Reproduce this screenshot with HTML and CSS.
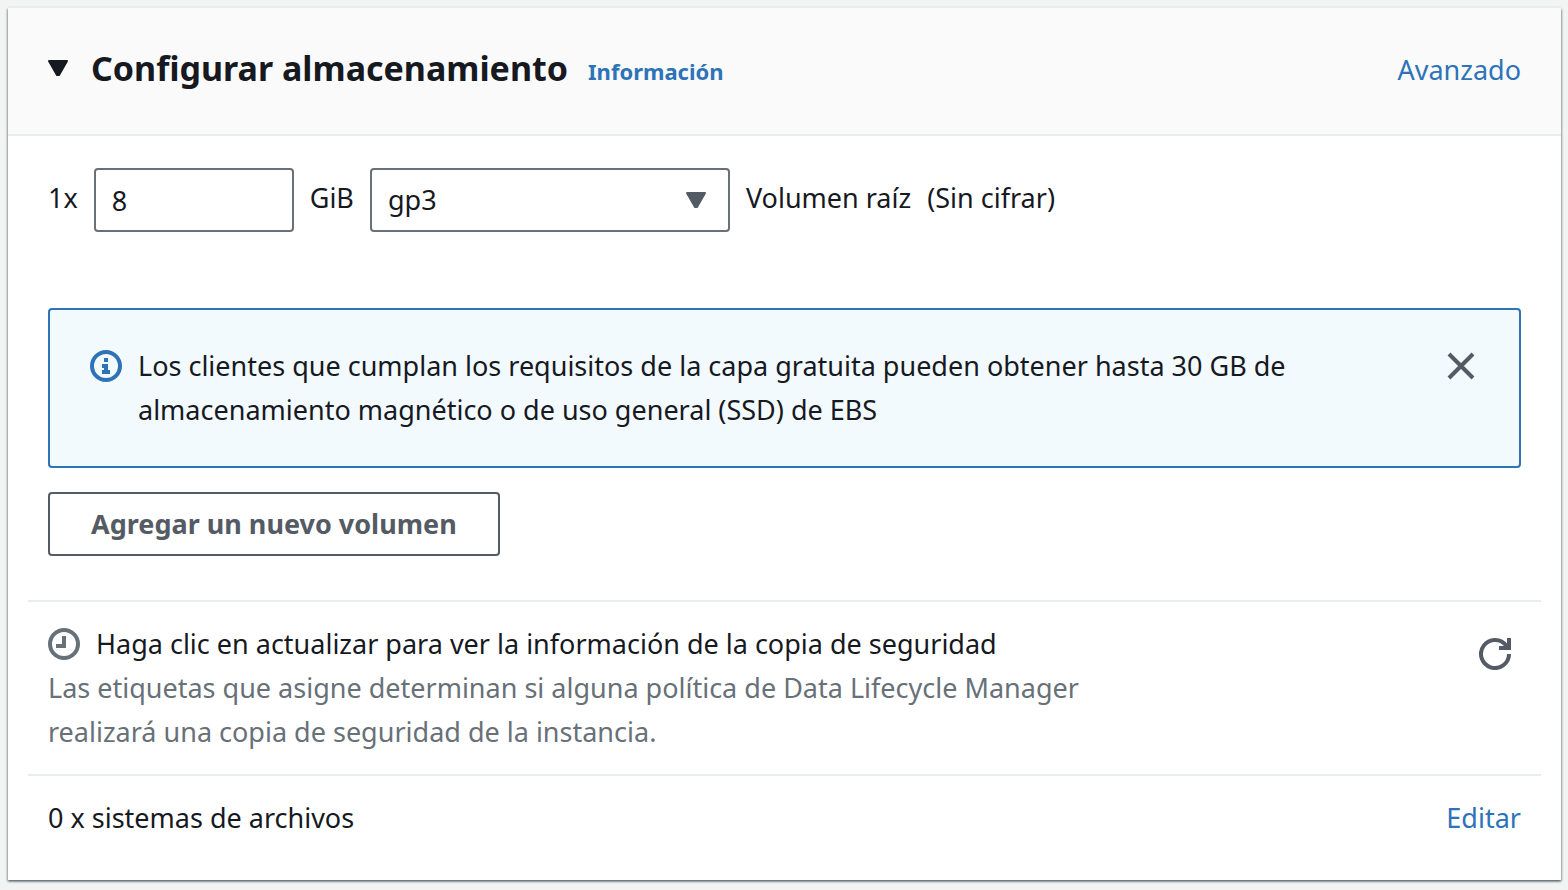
FILE: index.html
```html
<!DOCTYPE html>
<html lang="es">
<head>
<meta charset="utf-8">
<meta name="viewport" content="width=device-width, initial-scale=1">
<title>Configurar almacenamiento</title>
<link rel="stylesheet" href="styles.css">
</head>
<body>
<main class="card">
  <header class="card-header">
    <button class="icon-button toggle" type="button" aria-label="Contraer" aria-expanded="true">
      <svg width="20" height="16" viewBox="0 0 20 16" aria-hidden="true"><path d="M1 1h18l-8 14H9z" fill="#16191f" stroke="#16191f" stroke-width="2" stroke-linejoin="round"/></svg>
    </button>
    <h1 class="title">Configurar almacenamiento</h1>
    <a class="info-link" href="#">Información</a>
    <a class="link push" href="#">Avanzado</a>
  </header>

  <div class="card-body">
    <div class="volume">
      <label class="caption" for="size">1x</label>
      <input class="field size" id="size" type="text" inputmode="numeric" value="8">
      <label class="caption" for="type">GiB</label>
      <div class="select-wrap">
        <select class="field type" id="type"><option>gp3</option></select>
        <svg class="caret" width="20" height="16" viewBox="0 0 20 16" aria-hidden="true"><path d="M1 1h18l-8 14H9z" fill="#545b64" stroke="#545b64" stroke-width="2" stroke-linejoin="round"/></svg>
      </div>
      <span class="caption">Volumen raíz</span>
      <span class="caption">(Sin cifrar)</span>
    </div>

    <section class="alert">
      <svg class="alert-icon" width="32" height="32" viewBox="0 0 32 32" aria-hidden="true"><circle cx="16" cy="16" r="14" fill="none" stroke="#2e73b8" stroke-width="4"/><path d="M14 8h4v4h-4zM12 14h6v6h2v4h-8v-4h2v-2h-2z" fill="#2e73b8"/></svg>
      <p class="alert-text">Los clientes que cumplan los requisitos de la capa gratuita pueden obtener hasta 30 GB de almacenamiento magnético o de uso general (SSD) de EBS</p>
      <button class="icon-button close" type="button" aria-label="Cerrar">
        <svg width="28" height="28" viewBox="0 0 28 28" fill="none" stroke="#545b64" stroke-width="4" aria-hidden="true"><path d="M2 2l24 24M26 2L2 26"/></svg>
      </button>
    </section>

    <button class="add-button" type="button">Agregar un nuevo volumen</button>
  </div>

  <section class="row backup">
    <div class="backup-text">
      <p class="backup-title">
        <svg width="32" height="32" viewBox="0 0 32 32" fill="none" stroke="#687078" stroke-width="4" aria-hidden="true"><circle cx="16" cy="16" r="14"/><path d="M16 8v10H8"/></svg>
        Haga clic en actualizar para ver la información de la copia de seguridad
      </p>
      <p class="muted">Las etiquetas que asigne determinan si alguna política de Data Lifecycle Manager realizará una copia de seguridad de la instancia.</p>
    </div>
    <button class="icon-button refresh" type="button" aria-label="Actualizar">
      <svg width="32" height="32" viewBox="0 0 32 32" fill="none" stroke="#545b64" stroke-width="4" aria-hidden="true"><path d="M30 16A14 14 0 1 1 27.47 7.97M30 0v10H20"/><path d="M24 10l4-4v4z" fill="#545b64" stroke="none"/></svg>
    </button>
  </section>

  <section class="row files">
    <p>0 x sistemas de archivos</p>
    <a class="link push" href="#">Editar</a>
  </section>
</main>
</body>
</html>
```
FILE: styles.css
```css
* { box-sizing: border-box; }

body {
  margin: 0;
  padding: 8px 7px 8px 8px;
  background: #f2f3f3;
  color: #16191f;
  font: 27px/44px "Noto Sans", "Open Sans", sans-serif;
}

p, h1 { margin: 0; }
button, input, select { font: inherit; color: inherit; }
a { color: #2e73b8; text-decoration: none; }

.card {
  background: #fff;
  box-shadow:
    0 -2px 0 #eaeded,
    0 2px 2px rgba(0, 28, 36, 0.3),
    1px 1px 2px rgba(0, 28, 36, 0.3),
    -1px 1px 2px rgba(0, 28, 36, 0.3);
}

.card-header {
  display: flex;
  align-items: center;
  height: 128px;
  padding: 0 40px 6px;
  background: #fafafa;
  border-bottom: 2px solid #eaeded;
}

.icon-button {
  display: flex;
  padding: 0;
  border: 0;
  background: none;
  cursor: pointer;
}

.title { margin-left: 23px; font-size: 34px; font-weight: 700; }
.info-link { margin: 6px 0 0 20px; font-size: 22px; font-weight: 700; }
.push { margin-left: auto; }
.card-header .push { padding-top: 4px; }

.card-body { padding: 32px 40px 44px; }

.volume { display: flex; align-items: center; gap: 16px; }
.caption { padding-bottom: 4px; }

.field {
  height: 64px;
  padding: 0 16px;
  border: 2px solid #687078;
  border-radius: 4px;
  background: #fff;
}
.size { width: 200px; }
.select-wrap { position: relative; }
.type { width: 360px; appearance: none; }
.caret { position: absolute; top: 24px; right: 24px; pointer-events: none; }

.alert {
  display: flex;
  align-items: flex-start;
  margin: 76px 0 24px;
  padding: 34px 40px;
  border: 2px solid #2e73b8;
  border-radius: 4px;
  background: #f2fafd;
}
.alert-icon { flex: none; margin: 6px 16px 0 0; }
.alert-text { max-width: 1180px; }
.close { margin: 8px 4px 0 auto; }

.add-button {
  height: 64px;
  padding: 0 41px;
  border: 2px solid #545b64;
  border-radius: 4px;
  background: #fff;
  color: #545b64;
  font-weight: 700;
}

.row {
  display: flex;
  margin: 0 20px;
  padding: 20px;
  border-top: 2px solid #eaeded;
}
.backup-title { display: flex; align-items: center; gap: 16px; }
.backup-text { max-width: 1060px; }
.muted { color: #687078; }
.refresh { align-self: flex-start; margin: 16px 10px 0 auto; }
.files { padding-bottom: 40px; }
```
